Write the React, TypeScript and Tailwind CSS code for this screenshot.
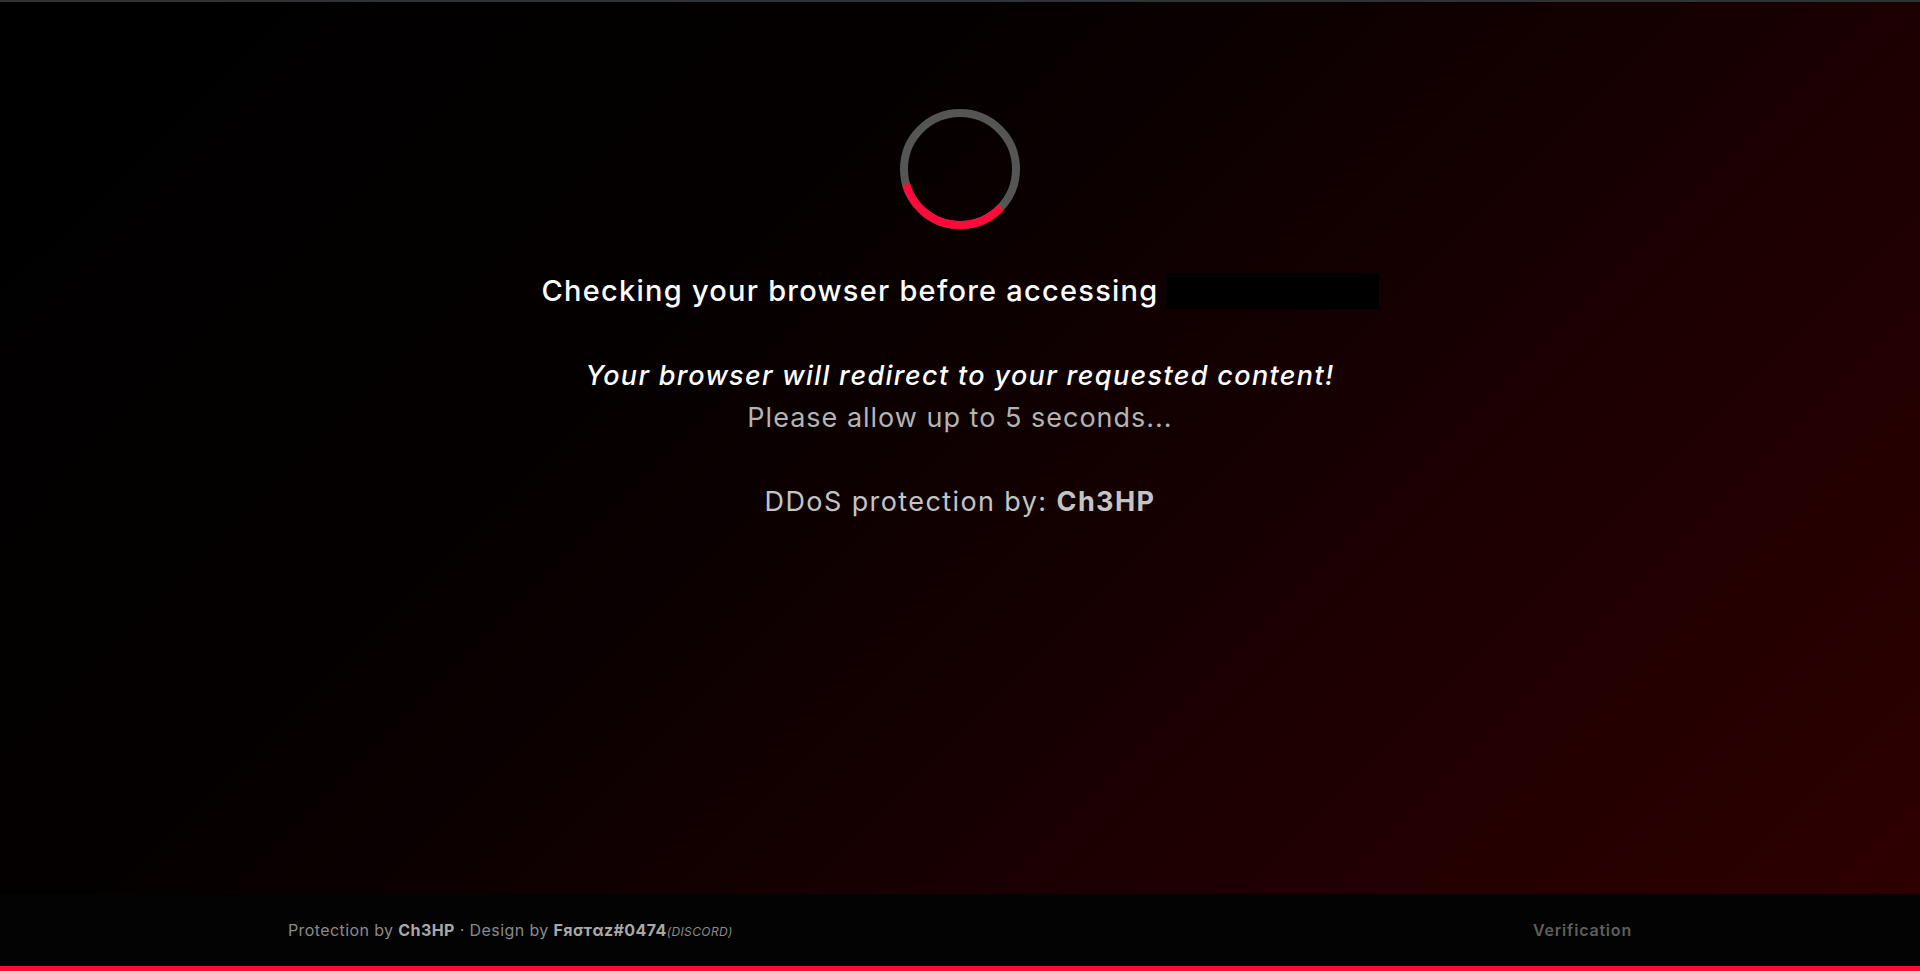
const FONT = "font-['Inter','Noto_Sans',sans-serif]";

function Spinner() {
  const r = 56;
  const c = 2 * Math.PI * r;
  return (
    <svg width="120" height="120" viewBox="0 0 120 120">
      <circle cx="60" cy="60" r={r} fill="none" stroke="#555555" strokeWidth="8" />
      <circle
        cx="60"
        cy="60"
        r={r}
        fill="none"
        stroke="#ff0b3a"
        strokeWidth="8"
        strokeDasharray={`${(121 / 360) * c} ${c}`}
        transform="rotate(43 60 60)"
      />
    </svg>
  );
}

export default function App() {
  return (
    <div className={`${FONT} flex min-h-screen flex-col border-t-2 border-[#303336] bg-black`}>
      {/* main area */}
      <main className="flex flex-1 flex-col items-center bg-[linear-gradient(135deg,#000000_0%,#050000_35%,#1c0002_70%,#2e0000_100%)] text-center">
        <div className="mt-[107px]">
          <Spinner />
        </div>

        <h1 className="mt-[44px] flex items-center text-[29px] leading-[36px] font-medium tracking-[1.25px] text-white">
          <span>Checking your browser before accessing</span>
          <span className="ml-[7px] inline-block h-[36px] w-[213px] bg-black" />
        </h1>

        <p className="mt-[46px] text-[27px] leading-[42px] font-medium tracking-[1.35px] italic text-white">
          Your browser will redirect to your requested content!
        </p>
        <p className="text-[27px] leading-[42px] tracking-[1px] text-[#b4b4b4]">Please allow up to 5 seconds...</p>

        <p className="mt-[42px] text-[27px] leading-[42px] tracking-[1.4px] text-[#c4c4c4]">
          DDoS protection by: <span className="font-bold">Ch3HP</span>
        </p>
      </main>

      {/* footer */}
      <footer className="flex h-[72px] items-center justify-between bg-[#030303] px-[288px] text-[16px] tracking-[0.4px] text-[#8a8a8a]">
        <div>
          Protection by <span className="font-bold text-[#a8a8a8]">Ch3HP</span> · Design by{" "}
          <span className="font-bold text-[#a8a8a8]">Fяσтαz#0474</span>
          <span className="text-[12px] italic">(DISCORD)</span>
        </div>
        <div className="font-semibold tracking-[0.8px] text-[#5e5e5e]">Verification</div>
      </footer>
      <div className="h-[5px] bg-[#ff0a2f]" />
    </div>
  );
}
